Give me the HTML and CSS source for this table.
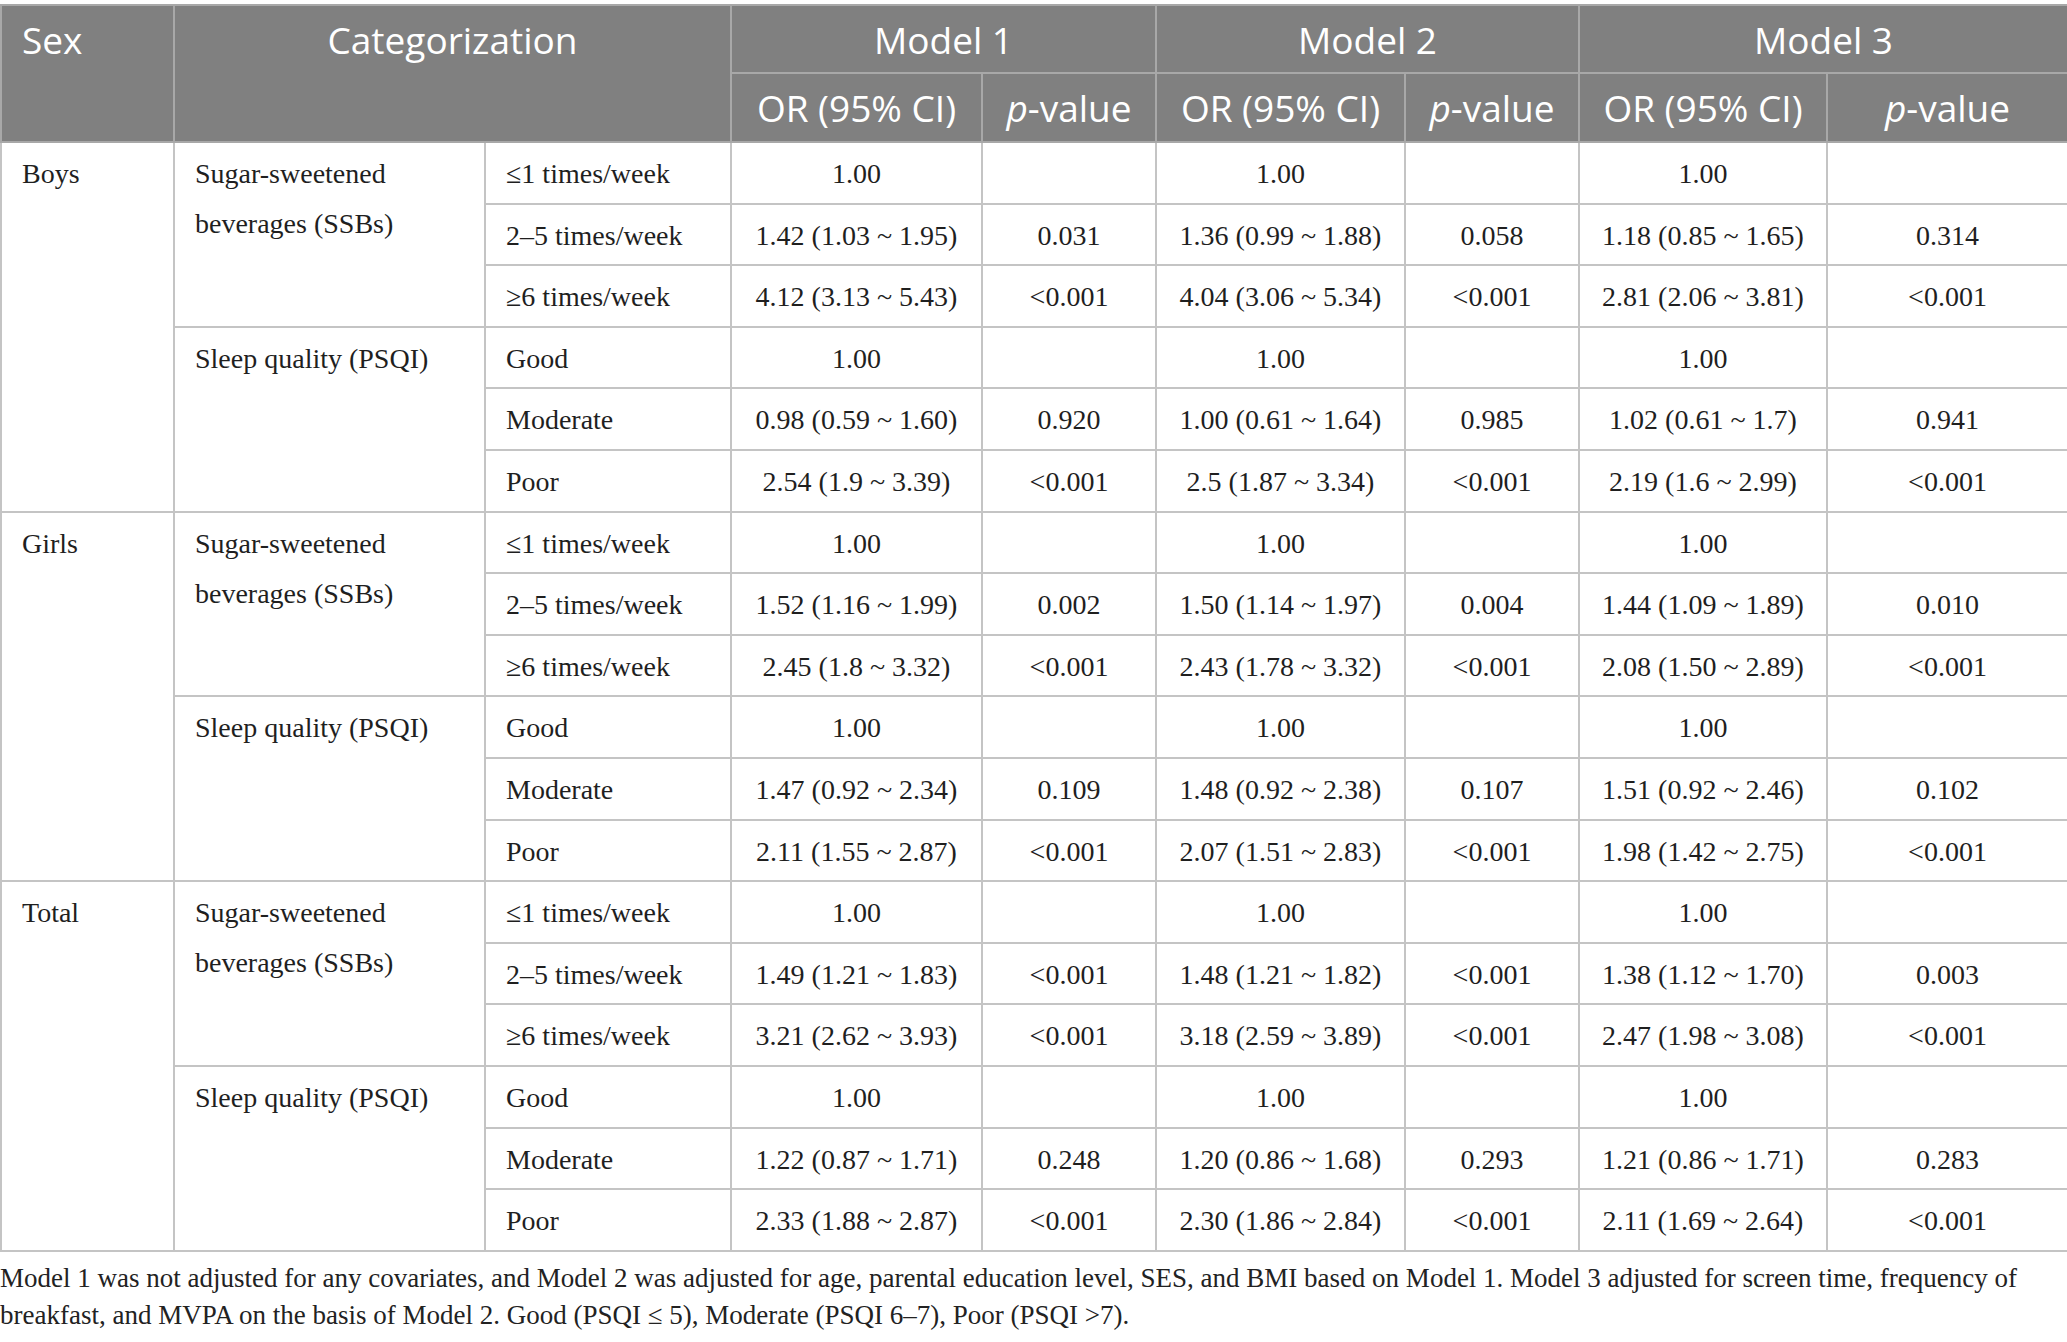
FILE: index.html
```html
<!DOCTYPE html>
<html lang="en">

<head>
    <meta charset="UTF-8">
    <title>Table 3</title>
    <link rel="stylesheet" href="styles.css">
</head>

<body>
    <table class="results">
        <colgroup>
            <col class="c-sex">
            <col class="c-var">
            <col class="c-level">
            <col class="c-or">
            <col class="c-p">
            <col class="c-or2">
            <col class="c-p">
            <col class="c-or3">
            <col class="c-p3">
        </colgroup>
        <thead>
            <tr class="head-top">
                <th rowspan="2" class="left">Sex</th>
                <th rowspan="2" colspan="2">Categorization</th>
                <th colspan="2">Model 1</th>
                <th colspan="2">Model 2</th>
                <th colspan="2">Model 3</th>
            </tr>
            <tr class="head-sub">
                <th>OR (95% CI)</th>
                <th><i>p</i>-value</th>
                <th>OR (95% CI)</th>
                <th><i>p</i>-value</th>
                <th>OR (95% CI)</th>
                <th><i>p</i>-value</th>
            </tr>
        </thead>
        <tbody>
            <!-- Boys -->
            <tr>
                <td rowspan="6" class="label">Boys</td>
                <td rowspan="3" class="label">Sugar-sweetened beverages (SSBs)</td>
                <td class="label">≤1 times/week</td>
                <td>1.00</td><td></td><td>1.00</td><td></td><td>1.00</td><td></td>
            </tr>
            <tr>
                <td class="label">2–5 times/week</td>
                <td>1.42 (1.03 ~ 1.95)</td><td>0.031</td><td>1.36 (0.99 ~ 1.88)</td><td>0.058</td><td>1.18 (0.85 ~ 1.65)</td><td>0.314</td>
            </tr>
            <tr>
                <td class="label">≥6 times/week</td>
                <td>4.12 (3.13 ~ 5.43)</td><td>&lt;0.001</td><td>4.04 (3.06 ~ 5.34)</td><td>&lt;0.001</td><td>2.81 (2.06 ~ 3.81)</td><td>&lt;0.001</td>
            </tr>
            <tr>
                <td rowspan="3" class="label">Sleep quality (PSQI)</td>
                <td class="label">Good</td>
                <td>1.00</td><td></td><td>1.00</td><td></td><td>1.00</td><td></td>
            </tr>
            <tr>
                <td class="label">Moderate</td>
                <td>0.98 (0.59 ~ 1.60)</td><td>0.920</td><td>1.00 (0.61 ~ 1.64)</td><td>0.985</td><td>1.02 (0.61 ~ 1.7)</td><td>0.941</td>
            </tr>
            <tr>
                <td class="label">Poor</td>
                <td>2.54 (1.9 ~ 3.39)</td><td>&lt;0.001</td><td>2.5 (1.87 ~ 3.34)</td><td>&lt;0.001</td><td>2.19 (1.6 ~ 2.99)</td><td>&lt;0.001</td>
            </tr>

            <!-- Girls -->
            <tr>
                <td rowspan="6" class="label">Girls</td>
                <td rowspan="3" class="label">Sugar-sweetened beverages (SSBs)</td>
                <td class="label">≤1 times/week</td>
                <td>1.00</td><td></td><td>1.00</td><td></td><td>1.00</td><td></td>
            </tr>
            <tr>
                <td class="label">2–5 times/week</td>
                <td>1.52 (1.16 ~ 1.99)</td><td>0.002</td><td>1.50 (1.14 ~ 1.97)</td><td>0.004</td><td>1.44 (1.09 ~ 1.89)</td><td>0.010</td>
            </tr>
            <tr>
                <td class="label">≥6 times/week</td>
                <td>2.45 (1.8 ~ 3.32)</td><td>&lt;0.001</td><td>2.43 (1.78 ~ 3.32)</td><td>&lt;0.001</td><td>2.08 (1.50 ~ 2.89)</td><td>&lt;0.001</td>
            </tr>
            <tr>
                <td rowspan="3" class="label">Sleep quality (PSQI)</td>
                <td class="label">Good</td>
                <td>1.00</td><td></td><td>1.00</td><td></td><td>1.00</td><td></td>
            </tr>
            <tr>
                <td class="label">Moderate</td>
                <td>1.47 (0.92 ~ 2.34)</td><td>0.109</td><td>1.48 (0.92 ~ 2.38)</td><td>0.107</td><td>1.51 (0.92 ~ 2.46)</td><td>0.102</td>
            </tr>
            <tr>
                <td class="label">Poor</td>
                <td>2.11 (1.55 ~ 2.87)</td><td>&lt;0.001</td><td>2.07 (1.51 ~ 2.83)</td><td>&lt;0.001</td><td>1.98 (1.42 ~ 2.75)</td><td>&lt;0.001</td>
            </tr>

            <!-- Total -->
            <tr>
                <td rowspan="6" class="label">Total</td>
                <td rowspan="3" class="label">Sugar-sweetened beverages (SSBs)</td>
                <td class="label">≤1 times/week</td>
                <td>1.00</td><td></td><td>1.00</td><td></td><td>1.00</td><td></td>
            </tr>
            <tr>
                <td class="label">2–5 times/week</td>
                <td>1.49 (1.21 ~ 1.83)</td><td>&lt;0.001</td><td>1.48 (1.21 ~ 1.82)</td><td>&lt;0.001</td><td>1.38 (1.12 ~ 1.70)</td><td>0.003</td>
            </tr>
            <tr>
                <td class="label">≥6 times/week</td>
                <td>3.21 (2.62 ~ 3.93)</td><td>&lt;0.001</td><td>3.18 (2.59 ~ 3.89)</td><td>&lt;0.001</td><td>2.47 (1.98 ~ 3.08)</td><td>&lt;0.001</td>
            </tr>
            <tr>
                <td rowspan="3" class="label">Sleep quality (PSQI)</td>
                <td class="label">Good</td>
                <td>1.00</td><td></td><td>1.00</td><td></td><td>1.00</td><td></td>
            </tr>
            <tr>
                <td class="label">Moderate</td>
                <td>1.22 (0.87 ~ 1.71)</td><td>0.248</td><td>1.20 (0.86 ~ 1.68)</td><td>0.293</td><td>1.21 (0.86 ~ 1.71)</td><td>0.283</td>
            </tr>
            <tr>
                <td class="label">Poor</td>
                <td>2.33 (1.88 ~ 2.87)</td><td>&lt;0.001</td><td>2.30 (1.86 ~ 2.84)</td><td>&lt;0.001</td><td>2.11 (1.69 ~ 2.64)</td><td>&lt;0.001</td>
            </tr>
        </tbody>
    </table>

    <p class="note">Model 1 was not adjusted for any covariates, and Model 2 was adjusted for age, parental education level, SES, and BMI based on Model 1. Model 3 adjusted for screen time, frequency of breakfast, and MVPA on the basis of Model 2. Good (PSQI ≤ 5), Moderate (PSQI 6–7), Poor (PSQI &gt;7).</p>
</body>

</html>
```

FILE: styles.css
```css
body {
    margin: 0;
    padding-top: 4px;
    background-color: white;
    font-family: "Liberation Serif", "Times New Roman", serif;
    color: #1f1f1f;
}

.results {
    width: 2067px;
    table-layout: fixed;
    border-collapse: collapse;
}

.c-sex { width: 173px; }
.c-var { width: 311px; }
.c-level { width: 246px; }
.c-or { width: 251px; }
.c-p { width: 174px; }
.c-or2 { width: 249px; }
.c-or3 { width: 248px; }
.c-p3 { width: 241px; }

th {
    background-color: #808080;
    color: white;
    font-family: "Open Sans", "Liberation Sans", sans-serif;
    font-weight: 400;
    font-size: 37px;
    text-align: center;
    border: 2px solid #a8a8a8;
    padding: 0 20px;
}

th.left {
    text-align: left;
    vertical-align: top;
    padding-top: 8px;
}

thead th[rowspan="2"] {
    vertical-align: top;
    padding-top: 8px;
}

th i {
    font-style: italic;
}

.head-top {
    height: 68px;
}

.head-sub {
    height: 69px;
}

thead {
    border-top: 2px solid #b3b3b3;
}

td {
    height: 61.6px;
    box-sizing: border-box;
    border: 2px solid #c4c4c4;
    font-size: 28px;
    line-height: 50px;
    text-align: center;
    vertical-align: top;
    padding: 6px 20px 0;
    white-space: nowrap;
}

td.label {
    text-align: left;
    white-space: normal;
}

.note {
    margin: 8px 0 0;
    font-size: 27px;
    line-height: 37px;
    color: #222;
}
```
